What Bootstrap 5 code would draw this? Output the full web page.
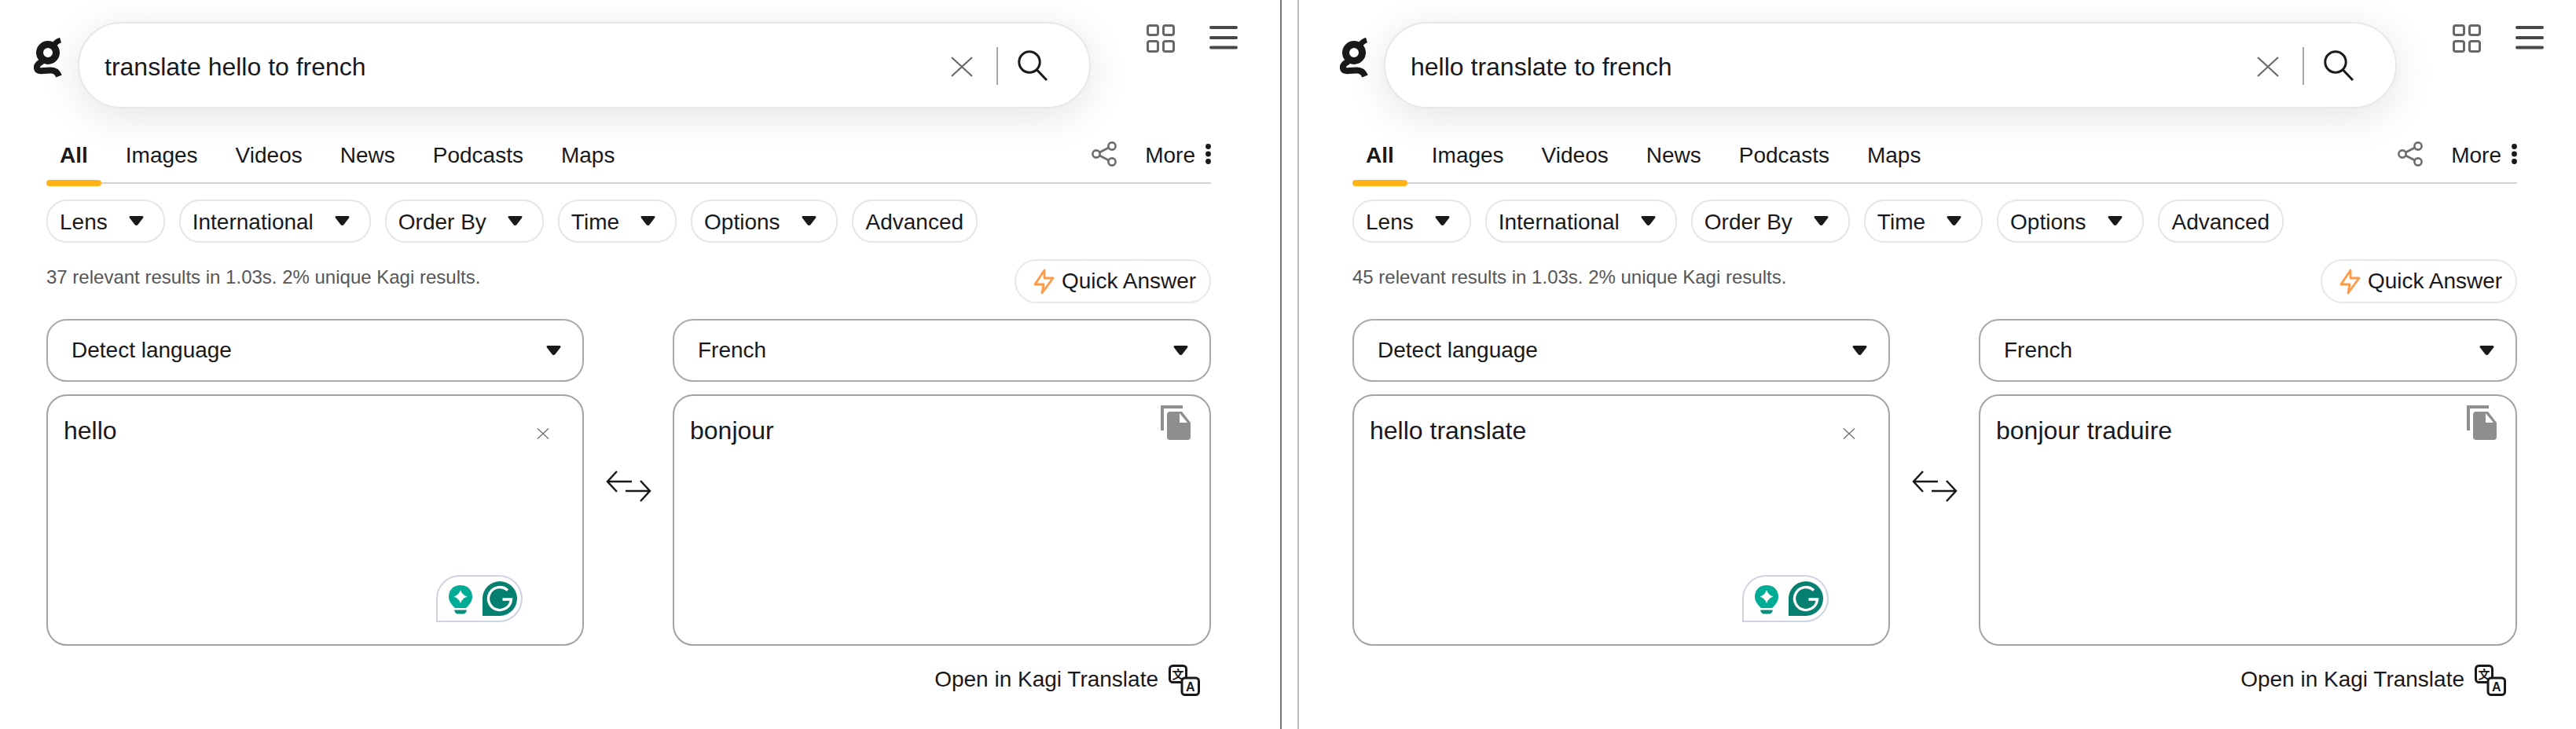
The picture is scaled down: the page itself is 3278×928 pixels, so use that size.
<!DOCTYPE html>
<html lang="en">
<head>
    <meta charset="UTF-8">
    <title>translate hello to french - Kagi Search</title>
    <link href="https://cdn.jsdelivr.net/npm/bootstrap@5.3.0/dist/css/bootstrap.min.css" rel="stylesheet">
    <style>
        html, body { height: 100%; }
        body {
            background: #fff;
            color: #19191b;
            font-family: "Liberation Sans", Arial, sans-serif;
            font-size: 28px;
            overflow: hidden;
        }
        .shot { width: 3278px; height: 928px; }
        .pane-one { width: 1631px; border-right: 2px solid #77777a; }
        .pane-two { margin-left: 20px; padding-left: 9px; border-left: 2px solid #bcbcbc; }
        .pane-inner { width: 1630px; }

        .top-row { padding-top: 28px; height: 138px; }
        .logo-mark { width: 36px; height: 54px; margin-left: 43px; margin-top: 19px; }
        .search-box {
            width: 1289px;
            height: 110px;
            margin-left: 20px;
            border: 2px solid #e8e8e8;
            border-radius: 55px;
            background: #fff;
            box-shadow: 0 10px 52px rgba(0, 0, 0, .11);
        }
        .search-input, .search-input:focus {
            flex: 1;
            min-width: 0;
            height: 60px;
            padding: 4px 0 0 32px;
            border: 0;
            outline: 0;
            background: transparent;
            color: #19191b;
            font-size: 32px;
            box-shadow: none;
        }
        .clear-x { width: 28px; height: 26px; margin-top: 4px; }
        .search-sep { width: 2px; height: 48px; margin: 2px 25px 0 30px; background: #a8a8a8; }
        .search-glass { width: 38px; height: 39px; margin-right: 53px; margin-top: 1px; }
        .grid-icon { width: 36px; height: 36px; margin-left: 71px; margin-top: 3px; }
        .menu-icon { width: 36px; height: 30px; margin-left: 44px; margin-top: 5px; }

        .content-col { width: 1482px; margin-left: 59px; }

        .tab-row { margin-top: 41px; border-bottom: 2px solid #d2d2d2; height: 55px; }
        .tab-row .nav-link {
            padding: 0 17px;
            height: 53px;
            margin-right: 14px;
            line-height: 37px;
            color: #19191b;
            font-size: 28px;
            position: relative;
        }
        .tab-row .nav-link.is-on { font-weight: 700; }
        .tab-row .nav-link.is-on::after {
            content: "";
            position: absolute;
            left: 0;
            right: 0;
            bottom: -5px;
            height: 8px;
            border-radius: 4px;
            background: #ffb319;
        }
        .share-icon { width: 32px; height: 32px; margin-top: 1px; }
        .more-label { margin-left: 36px; line-height: 37px; }
        .more-dots { width: 7px; height: 26px; margin-left: 13px; margin-top: 4px; }

        .chip-row { margin-top: 20px; gap: 18px; }
        .chip-btn {
            height: 55px;
            padding: 2px 16px 0;
            border: 2px solid #e6e6e6;
            border-radius: 26px;
            background: #fff;
            color: #19191b;
            font-size: 28px;
            line-height: 1;
        }
        .chip-btn.has-caret { padding: 2px 25px 0 15px; }
        .caret-mark { width: 19px; height: 12px; margin-left: 27px; margin-top: -4px; flex: none; }

        .stat-row { margin-top: 21px; height: 56px; }
        .stat-line { font-size: 24px; line-height: 46px; color: #565658; }
        .quick-pill {
            height: 56px;
            width: 250px;
            padding: 0 0 0 22px;
            border: 2px solid #e8e8e8;
            border-radius: 28px;
            background: #fff;
            color: #19191b;
            font-size: 28px;
            line-height: 1;
        }
        .bolt-mark { width: 27px; height: 33px; margin-right: 9px; flex: none; }

        .lang-row { margin-top: 20px; }
        .lang-col { flex: 0 0 684px; }
        .lang-col + .swap-col + .lang-col { flex-basis: 685px; }
        .swap-col { flex: 0 0 113px; padding-top: 10px; }
        .swap-mark { width: 58px; height: 42px; margin-left: 28px; }
        .lang-pick { height: 80px; }
        .lang-pick .form-select {
            height: 80px;
            padding: 0 60px 0 30px;
            border: 2px solid #a9a9ab;
            border-radius: 26px;
            background-image: none;
            color: #19191b;
            font-size: 28px;
            box-shadow: none;
        }
        .pick-caret { position: absolute; right: 29px; top: 34px; width: 19px; height: 12px; pointer-events: none; }
        .text-wrap { margin-top: 16px; height: 320px; }
        .text-wrap .form-control {
            height: 320px;
            padding: 20px 60px 10px 20px;
            border: 2px solid #a3a3a6;
            border-radius: 26px;
            color: #19191b;
            font-size: 32px;
            line-height: 1.5;
            resize: none;
            box-shadow: none;
        }
        .field-x { position: absolute; left: 624px; top: 43px; width: 16px; height: 14px; }
        .copy-mark { position: absolute; left: 621px; top: 14px; width: 38px; height: 44px; }
        .gram-badge {
            position: absolute;
            left: 496px;
            top: 230px;
            width: 110px;
            height: 60px;
            border: 2px solid #cfd2e0;
            border-radius: 30px 30px 30px 0;
            background: #fff;
        }
        .gram-bulb { position: absolute; left: 14px; top: 11px; width: 30px; height: 38px; }
        .gram-g { position: absolute; left: 57px; top: 6px; width: 44px; height: 44px; }

        .open-row { margin-top: 18px; height: 50px; padding-right: 14px; }
        .open-link { color: #19191b; text-decoration: none; font-size: 28px; }
        .tr-mark { width: 40px; height: 40px; margin-left: 13px; margin-top: 1px; }
    </style>
</head>
<body>
    <svg class="d-none">
        <symbol id="ic-logo" viewBox="0 0 36 54">
            <circle cx="18" cy="20" r="10.5" fill="none" stroke="#19191b" stroke-width="9"/>
            <path d="M25 13 Q27 6 34 4" fill="none" stroke="#19191b" stroke-width="7"/>
            <path d="M11 31 Q3 35 4 40 Q5 44 12 43 L21 42.5 Q29 42 32 50" fill="none" stroke="#19191b" stroke-width="8" stroke-linejoin="round"/>
        </symbol>
        <symbol id="ic-x" viewBox="0 0 28 26">
            <path d="M1 1 L27 25 M27 1 L1 25" fill="none" stroke="#6a6a6d" stroke-width="2.2"/>
        </symbol>
        <symbol id="ic-glass" viewBox="0 0 38 39">
            <circle cx="15" cy="15" r="13.2" fill="none" stroke="#19191b" stroke-width="3"/>
            <path d="M24.5 25 L37 38" fill="none" stroke="#19191b" stroke-width="3"/>
        </symbol>
        <symbol id="ic-grid" viewBox="0 0 36 36">
            <g fill="none" stroke="#67676c" stroke-width="3">
                <rect x="1.5" y="1.5" width="13" height="12" rx="2.5"/>
                <rect x="21.5" y="1.5" width="13" height="12" rx="2.5"/>
                <rect x="1.5" y="21.5" width="13" height="13" rx="2.5"/>
                <rect x="21.5" y="21.5" width="13" height="13" rx="2.5"/>
            </g>
        </symbol>
        <symbol id="ic-menu" viewBox="0 0 36 30">
            <g fill="#46464b">
                <rect y="0" width="36" height="4" rx="2"/>
                <rect y="13" width="36" height="4" rx="2"/>
                <rect y="25.5" width="36" height="4" rx="2"/>
            </g>
        </symbol>
        <symbol id="ic-share" viewBox="0 0 32 32">
            <g fill="none" stroke="#6c6c71" stroke-width="2.6">
                <circle cx="26" cy="6" r="4.6"/>
                <circle cx="6" cy="16" r="4.6"/>
                <circle cx="26" cy="26" r="4.6"/>
                <path d="M10.2 14 L21.8 8 M10.2 18 L21.8 24"/>
            </g>
        </symbol>
        <symbol id="ic-dots" viewBox="0 0 7 26">
            <g fill="#19191b"><circle cx="3.5" cy="3.5" r="3.4"/><circle cx="3.5" cy="13" r="3.4"/><circle cx="3.5" cy="22.5" r="3.4"/></g>
        </symbol>
        <symbol id="ic-caret" viewBox="0 0 19 12">
            <path d="M2.5 0 H16.5 Q19.5 0 18 2.5 L11.5 11 Q9.5 12.8 7.5 11 L1 2.5 Q-.5 0 2.5 0Z" fill="#19191b"/>
        </symbol>
        <symbol id="ic-bolt" viewBox="0 0 27 33">
            <path d="M14 2 L2 20 H13 L11 31 L25 12 H14 Z" fill="none" stroke="#ff9a47" stroke-width="2.8" stroke-linejoin="round"/>
        </symbol>
        <symbol id="ic-swap" viewBox="0 0 58 42">
            <g fill="none" stroke="#19191b" stroke-width="2.5">
                <path d="M14 2 L2 15 L14 28 M2 15 H33"/>
                <path d="M44 14 L56 27 L44 40 M25 27 H56"/>
            </g>
        </symbol>
        <symbol id="ic-copy" viewBox="0 0 38 44">
            <path d="M2 32 V2 H28" fill="none" stroke="#8e8e8e" stroke-width="4"/>
            <path d="M12 8 H27 L38 22 V40 Q38 44 34 44 H12 Q8 44 8 40 V12 Q8 8 12 8Z" fill="#8e8e8e"/>
            <path d="M24 10 V22 H34Z" fill="#fff"/>
        </symbol>
        <symbol id="ic-bulb" viewBox="0 0 30 38">
            <path d="M15 0 C24 0 30 6 30 14.5 C30 21 26 25 22 29 H8 C4 25 0 21 0 14.5 C0 6 6 0 15 0Z" fill="#00ad94"/>
            <path d="M7 31.5 H23 Q22 36.5 18 36.5 H12 Q8 36.5 7 31.5Z" fill="#0a8f7d"/>
            <path d="M15 6 Q17 12.5 23.5 14.5 Q17 16.5 15 23 Q13 16.5 6.5 14.5 Q13 12.5 15 6Z" fill="#fff"/>
        </symbol>
        <symbol id="ic-gmark" viewBox="0 0 44 44">
            <path d="M0 44 V22 A22 22 0 1 1 22 44Z" fill="#047f70"/>
            <path d="M32 11.5 A14.5 14.5 0 1 0 36.5 23 H25.5" fill="none" stroke="#fff" stroke-width="3.4"/>
        </symbol>
        <symbol id="ic-translate" viewBox="0 0 40 40">
            <rect x="1.5" y="1.5" width="21" height="21" rx="4" fill="#fff" stroke="#19191b" stroke-width="3"/>
            <rect x="17" y="17" width="21.5" height="21.5" rx="4" fill="#fff" stroke="#19191b" stroke-width="3"/>
            <text x="12" y="18" text-anchor="middle" font-size="15" font-weight="700" fill="#19191b" font-family="'Noto Sans CJK SC', sans-serif">文</text>
            <text x="27.8" y="34" text-anchor="middle" font-size="16" font-weight="700" fill="#19191b" font-family="'Liberation Sans', sans-serif">A</text>
        </symbol>
    </svg>

    <div class="shot d-flex">
        <!-- left window -->
        <div class="pane-one flex-shrink-0">
            <div class="pane-inner">
                <div class="top-row d-flex align-items-start">
                    <svg class="logo-mark"><use href="#ic-logo"/></svg>
                    <div class="search-box d-flex align-items-center">
                        <input class="search-input" type="text" value="translate hello to french">
                        <svg class="clear-x"><use href="#ic-x"/></svg>
                        <span class="search-sep"></span>
                        <svg class="search-glass"><use href="#ic-glass"/></svg>
                    </div>
                    <svg class="grid-icon"><use href="#ic-grid"/></svg>
                    <svg class="menu-icon"><use href="#ic-menu"/></svg>
                </div>
                <div class="content-col">
                    <div class="tab-row d-flex align-items-start">
                        <nav class="nav flex-nowrap">
                            <a class="nav-link is-on" href="#">All</a>
                            <a class="nav-link" href="#">Images</a>
                            <a class="nav-link" href="#">Videos</a>
                            <a class="nav-link" href="#">News</a>
                            <a class="nav-link" href="#">Podcasts</a>
                            <a class="nav-link" href="#">Maps</a>
                        </nav>
                        <div class="ms-auto d-flex align-items-start">
                            <svg class="share-icon"><use href="#ic-share"/></svg>
                            <span class="more-label">More</span>
                            <svg class="more-dots"><use href="#ic-dots"/></svg>
                        </div>
                    </div>
                    <div class="chip-row d-flex">
                        <button class="btn chip-btn has-caret d-flex align-items-center">Lens<svg class="caret-mark"><use href="#ic-caret"/></svg></button>
                        <button class="btn chip-btn has-caret d-flex align-items-center">International<svg class="caret-mark"><use href="#ic-caret"/></svg></button>
                        <button class="btn chip-btn has-caret d-flex align-items-center">Order By<svg class="caret-mark"><use href="#ic-caret"/></svg></button>
                        <button class="btn chip-btn has-caret d-flex align-items-center">Time<svg class="caret-mark"><use href="#ic-caret"/></svg></button>
                        <button class="btn chip-btn has-caret d-flex align-items-center">Options<svg class="caret-mark"><use href="#ic-caret"/></svg></button>
                        <button class="btn chip-btn">Advanced</button>
                    </div>
                    <div class="stat-row d-flex justify-content-between align-items-start">
                        <div class="stat-line">37 relevant results in 1.03s. 2% unique Kagi results.</div>
                        <button class="btn quick-pill d-flex align-items-center"><svg class="bolt-mark"><use href="#ic-bolt"/></svg>Quick Answer</button>
                    </div>
                    <div class="lang-row d-flex">
                        <div class="lang-col">
                            <div class="lang-pick position-relative">
                                <select class="form-select"><option>Detect language</option></select>
                                <svg class="pick-caret"><use href="#ic-caret"/></svg>
                            </div>
                            <div class="text-wrap position-relative">
                                <textarea class="form-control">hello</textarea>
                                <svg class="field-x"><use href="#ic-x"/></svg>
                                <div class="gram-badge">
                                    <svg class="gram-bulb"><use href="#ic-bulb"/></svg>
                                    <svg class="gram-g"><use href="#ic-gmark"/></svg>
                                </div>
                            </div>
                        </div>
                        <div class="swap-col d-flex align-items-center">
                            <svg class="swap-mark"><use href="#ic-swap"/></svg>
                        </div>
                        <div class="lang-col">
                            <div class="lang-pick position-relative">
                                <select class="form-select"><option>French</option></select>
                                <svg class="pick-caret"><use href="#ic-caret"/></svg>
                            </div>
                            <div class="text-wrap position-relative">
                                <textarea class="form-control" readonly>bonjour</textarea>
                                <svg class="copy-mark"><use href="#ic-copy"/></svg>
                            </div>
                        </div>
                    </div>
                    <div class="open-row d-flex justify-content-end align-items-center">
                        <a class="open-link" href="#">Open in Kagi Translate</a>
                        <svg class="tr-mark"><use href="#ic-translate"/></svg>
                    </div>
                </div>
            </div>
        </div>

        <!-- right window -->
        <div class="pane-two flex-shrink-0">
            <div class="pane-inner">
                <div class="top-row d-flex align-items-start">
                    <svg class="logo-mark"><use href="#ic-logo"/></svg>
                    <div class="search-box d-flex align-items-center">
                        <input class="search-input" type="text" value="hello translate to french">
                        <svg class="clear-x"><use href="#ic-x"/></svg>
                        <span class="search-sep"></span>
                        <svg class="search-glass"><use href="#ic-glass"/></svg>
                    </div>
                    <svg class="grid-icon"><use href="#ic-grid"/></svg>
                    <svg class="menu-icon"><use href="#ic-menu"/></svg>
                </div>
                <div class="content-col">
                    <div class="tab-row d-flex align-items-start">
                        <nav class="nav flex-nowrap">
                            <a class="nav-link is-on" href="#">All</a>
                            <a class="nav-link" href="#">Images</a>
                            <a class="nav-link" href="#">Videos</a>
                            <a class="nav-link" href="#">News</a>
                            <a class="nav-link" href="#">Podcasts</a>
                            <a class="nav-link" href="#">Maps</a>
                        </nav>
                        <div class="ms-auto d-flex align-items-start">
                            <svg class="share-icon"><use href="#ic-share"/></svg>
                            <span class="more-label">More</span>
                            <svg class="more-dots"><use href="#ic-dots"/></svg>
                        </div>
                    </div>
                    <div class="chip-row d-flex">
                        <button class="btn chip-btn has-caret d-flex align-items-center">Lens<svg class="caret-mark"><use href="#ic-caret"/></svg></button>
                        <button class="btn chip-btn has-caret d-flex align-items-center">International<svg class="caret-mark"><use href="#ic-caret"/></svg></button>
                        <button class="btn chip-btn has-caret d-flex align-items-center">Order By<svg class="caret-mark"><use href="#ic-caret"/></svg></button>
                        <button class="btn chip-btn has-caret d-flex align-items-center">Time<svg class="caret-mark"><use href="#ic-caret"/></svg></button>
                        <button class="btn chip-btn has-caret d-flex align-items-center">Options<svg class="caret-mark"><use href="#ic-caret"/></svg></button>
                        <button class="btn chip-btn">Advanced</button>
                    </div>
                    <div class="stat-row d-flex justify-content-between align-items-start">
                        <div class="stat-line">45 relevant results in 1.03s. 2% unique Kagi results.</div>
                        <button class="btn quick-pill d-flex align-items-center"><svg class="bolt-mark"><use href="#ic-bolt"/></svg>Quick Answer</button>
                    </div>
                    <div class="lang-row d-flex">
                        <div class="lang-col">
                            <div class="lang-pick position-relative">
                                <select class="form-select"><option>Detect language</option></select>
                                <svg class="pick-caret"><use href="#ic-caret"/></svg>
                            </div>
                            <div class="text-wrap position-relative">
                                <textarea class="form-control">hello translate</textarea>
                                <svg class="field-x"><use href="#ic-x"/></svg>
                                <div class="gram-badge">
                                    <svg class="gram-bulb"><use href="#ic-bulb"/></svg>
                                    <svg class="gram-g"><use href="#ic-gmark"/></svg>
                                </div>
                            </div>
                        </div>
                        <div class="swap-col d-flex align-items-center">
                            <svg class="swap-mark"><use href="#ic-swap"/></svg>
                        </div>
                        <div class="lang-col">
                            <div class="lang-pick position-relative">
                                <select class="form-select"><option>French</option></select>
                                <svg class="pick-caret"><use href="#ic-caret"/></svg>
                            </div>
                            <div class="text-wrap position-relative">
                                <textarea class="form-control" readonly>bonjour traduire</textarea>
                                <svg class="copy-mark"><use href="#ic-copy"/></svg>
                            </div>
                        </div>
                    </div>
                    <div class="open-row d-flex justify-content-end align-items-center">
                        <a class="open-link" href="#">Open in Kagi Translate</a>
                        <svg class="tr-mark"><use href="#ic-translate"/></svg>
                    </div>
                </div>
            </div>
        </div>
    </div>

    <script src="https://cdn.jsdelivr.net/npm/bootstrap@5.3.0/dist/js/bootstrap.bundle.min.js"></script>
</body>
</html>
